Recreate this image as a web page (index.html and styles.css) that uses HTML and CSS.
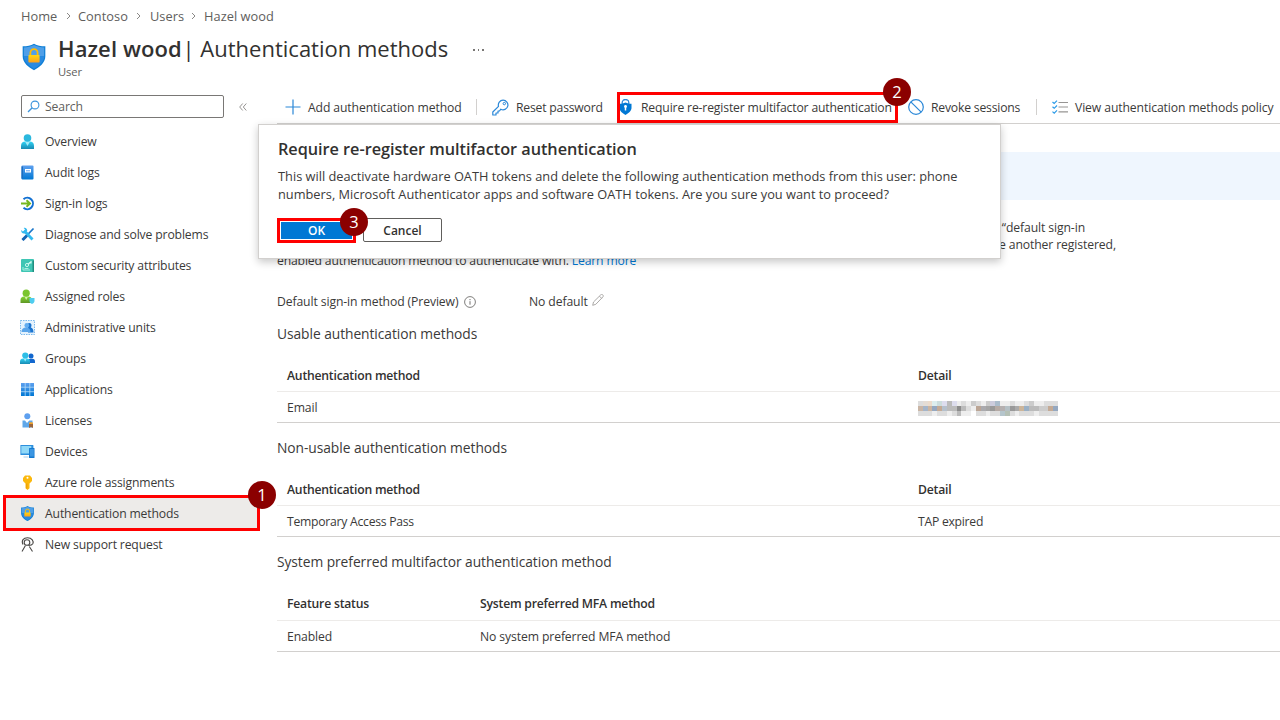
FILE: index.html
```html
<!DOCTYPE html>
<html lang="en">
<head>
    <meta charset="UTF-8">
    <meta name="viewport" content="width=device-width, initial-scale=1.0">
    <title>Hazel wood | Authentication methods</title>
    <link rel="stylesheet" href="styles.css">
</head>
<body>
    <!-- Shared gradients and the shield icon -->
    <svg class="defs" width="0" height="0">
        <defs>
            <linearGradient id="blue" x1="0" y1="0" x2="0" y2="1"><stop offset="0" stop-color="#5ea0ef"/><stop offset="1" stop-color="#0078d4"/></linearGradient>
            <linearGradient id="cyan" x1="0" y1="0" x2="0" y2="1"><stop offset="0" stop-color="#32d4f5"/><stop offset="1" stop-color="#198ab3"/></linearGradient>
            <linearGradient id="green" x1="0" y1="0" x2="0" y2="1"><stop offset="0" stop-color="#86d633"/><stop offset="1" stop-color="#5e9624"/></linearGradient>
            <linearGradient id="gold" x1="0" y1="0" x2="0" y2="1"><stop offset="0" stop-color="#ffd70f"/><stop offset="1" stop-color="#fea11b"/></linearGradient>
            <symbol id="shield" viewBox="0 0 18 20">
                <path d="M9 0C6.5 1.5 4 2 0.5 2v7.5C0.5 14.5 5 17.8 9 20c4-2.2 8.5-5.5 8.5-10.5V2C14 2 11.5 1.5 9 0z" fill="#0f7fd6"/>
                <path d="M9 1C6.5 2.3 4.5 2.8 1.4 2.9v6.6h15.2V2.9C13.5 2.8 11.5 2.3 9 1z" fill="#4f9fe8"/>
                <path d="M1.4 9.5c0 4 3.6 7 7.6 9.4 4-2.4 7.6-5.4 7.6-9.4z" fill="#2a8ae0"/>
                <path d="M6.3 9V6.8a2.7 2.7 0 0 1 5.4 0V9" fill="none" stroke="#ffbd02" stroke-width="1.3"/>
                <rect x="4.8" y="8.5" width="8.4" height="5.6" rx="0.6" fill="url(#gold)"/>
            </symbol>
        </defs>
    </svg>

    <header class="header">
        <div class="breadcrumb">
            <span class="crumb crumb-home">Home</span>
            <svg class="chevron" width="6" height="8" viewBox="0 0 6 8"><path d="M1 1l3 3-3 3"/></svg>
            <span class="crumb crumb-contoso">Contoso</span>
            <svg class="chevron" width="6" height="8" viewBox="0 0 6 8"><path d="M1 1l3 3-3 3"/></svg>
            <span class="crumb crumb-users">Users</span>
            <svg class="chevron" width="6" height="8" viewBox="0 0 6 8"><path d="M1 1l3 3-3 3"/></svg>
            <span class="crumb crumb-name">Hazel wood</span>
        </div>
        <div class="title-row">
            <svg class="title-icon" width="24" height="28"><use href="#shield"/></svg>
            <div class="title-text">
                <h1><strong>Hazel wood</strong> <span>| Authentication methods</span></h1>
                <p class="subtitle">User</p>
            </div>
            <span class="more"><i></i><i></i><i></i></span>
        </div>
    </header>

    <div class="layout">
        <aside class="sidebar">
            <div class="search-row">
                <div class="search">
                    <svg width="13" height="13" viewBox="0 0 13 13"><circle cx="8" cy="5" r="3.9" fill="none" stroke="#3b93dc" stroke-width="1.1"/><path d="M5.2 7.8L1 12" stroke="#3b93dc" stroke-width="1.3"/></svg>
                    <span>Search</span>
                </div>
                <svg class="collapse" width="8" height="8" viewBox="0 0 8 8"><path d="M3.7 0.5L0.7 4l3 3.5M7.3 0.5L4.3 4l3 3.5" fill="none" stroke="#8a8886" stroke-width="0.9"/></svg>
            </div>
            <ul class="nav">
                <li class="nav-item">
                    <svg width="14" height="15" viewBox="0 0 14 15"><path d="M0.5 15v-3.5C0.5 9 2.5 7.5 4.5 7.5h5c2 0 4 1.5 4 4V15z" fill="url(#cyan)"/><path d="M4.5 7.5L7 12l2.5-4.5z" fill="#a4ecfa"/><circle cx="7" cy="4" r="3.8" fill="#2bb8de"/></svg>
                    <span>Overview</span>
                </li>
                <li class="nav-item">
                    <svg width="14" height="15" viewBox="0 0 14 15"><rect x="1" y="0.5" width="12" height="14" rx="1" fill="url(#blue)"/><path d="M1 1.5h1.5v12H1z" fill="#1c6dc0"/><rect x="4.5" y="4" width="6" height="3.5" fill="#fff"/><path d="M5.5 5.8h4" stroke="#5ea0ef"/></svg>
                    <span>Audit logs</span>
                </li>
                <li class="nav-item">
                    <svg width="14" height="15" viewBox="0 0 14 15"><path d="M3 3.2a5.7 5.7 0 1 1 0 8.6" fill="none" stroke="#1270d2" stroke-width="2"/><path d="M0.5 7.5H9M6 4.2L9.5 7.5 6 10.8" fill="none" stroke="#76b820" stroke-width="1.9"/></svg>
                    <span>Sign-in logs</span>
                </li>
                <li class="nav-item">
                    <svg width="14" height="15" viewBox="0 0 14 15"><path d="M13 1.5L2 13" stroke="#1976c9" stroke-width="1.8"/><path d="M6.5 8.5L2 13" stroke="#1464b4" stroke-width="3"/><path d="M3.5 3.5L12 12.5" stroke="#32b9ef" stroke-width="2.8"/><path d="M3.2 0.9L4.6 2.5 4 4 2.4 4.4.8 3C.3 5.2 2 7 4.3 6.4L6.7 4C7 2 5.2.3 3.2.9z" fill="#32b9ef"/></svg>
                    <span>Diagnose and solve problems</span>
                </li>
                <li class="nav-item">
                    <svg width="14" height="15" viewBox="0 0 14 15"><rect x="0.5" y="1" width="13" height="13" rx="1" fill="#3fc6b4"/><path d="M12 2.5h1.5V14H12z" fill="#218e80"/><path d="M2.5 9v3h7M4 10.5h4" fill="none" stroke="#a8eee0" stroke-width="1"/><path d="M7.5 6.5l3-3M10.5 3v2.5" stroke="#d5faf2" stroke-width="1.2"/><circle cx="6.5" cy="7" r="1.6" fill="none" stroke="#d5faf2" stroke-width="0.9"/></svg>
                    <span>Custom security attributes</span>
                </li>
                <li class="nav-item">
                    <svg width="15" height="15" viewBox="0 0 15 15"><path d="M0.5 14v-3C0.5 9 2 7.5 4 7.5h4.5c2 0 3.5 1.5 3.5 3.5v3z" fill="url(#green)"/><path d="M4.5 7.5L6.2 11 8 7.5z" fill="#d6f3a9"/><circle cx="6.2" cy="4.2" r="3.6" fill="#7ac52d"/><path d="M9.5 9h5v3c0 1.5-1.5 2.5-2.5 3-1-.5-2.5-1.5-2.5-3z" fill="#4fcdf0"/></svg>
                    <span>Assigned roles</span>
                </li>
                <li class="nav-item">
                    <svg width="15" height="15" viewBox="0 0 15 15"><rect x="0.5" y="0.5" width="14" height="14" fill="#e4f2fd" stroke="#5ea8e8" stroke-width="0.8" stroke-dasharray="1.5 1"/><path d="M7.5 4c1-1.500 4-1.200 4 1.300 0 1-.3 1.700-.7 2.200 1.700.5 2.700 2 2.700 5H8z" fill="#1b74d0"/><circle cx="6.8" cy="5.5" r="2.4" fill="#63adf0"/><path d="M1.500 12c0-3 1.700-4.500 4.500-4.500s4.500 1.500 4.500 4.500z" fill="#5aa5ea"/></svg>
                    <span>Administrative units</span>
                </li>
                <li class="nav-item">
                    <svg width="15" height="15" viewBox="0 0 15 15"><circle cx="11" cy="5" r="2.5" fill="#1267ce"/><path d="M8 12V9.5C8 8.5 9 7.8 10 7.8h2.5c1.5 0 2.5 1 2.5 2.5V12z" fill="#1267ce"/><path d="M0 13v-2.5C0 8.8 1.3 7.5 3 7.5h4c1.7 0 3 1.3 3 3V13z" fill="url(#cyan)"/><path d="M3.7 7.5L5.2 10.5l1.5-3z" fill="#a4ecfa"/><circle cx="5.3" cy="4.5" r="3.1" fill="#2ebee6"/></svg>
                    <span>Groups</span>
                </li>
                <li class="nav-item">
                    <svg width="14" height="15" viewBox="0 0 14 15"><rect x="0.5" y="1" width="13" height="13" fill="url(#blue)"/><path d="M4.7 1v13M9.3 1v13M.5 5.2h13M.5 9.7h13" stroke="#b8dcf8" stroke-width="0.8"/></svg>
                    <span>Applications</span>
                </li>
                <li class="nav-item">
                    <svg width="14" height="15" viewBox="0 0 14 15"><circle cx="6.8" cy="3.3" r="3" fill="#5ea0ef"/><path d="M2 14.5V7.5h2.5L6.5 10l2.300-2.500H12v7z" fill="#5fa7e9"/><rect x="8.5" y="9.3" width="4" height="4" rx="1" fill="#f0a32c"/><path d="M8.5 11h4v4l-2-1-2 1z" fill="#9b653c"/></svg>
                    <span>Licenses</span>
                </li>
                <li class="nav-item">
                    <svg width="15" height="15" viewBox="0 0 15 15"><rect x="0.4" y="1" width="13" height="10" rx="0.5" fill="#2d8fdd"/><rect x="1.3" y="2" width="10" height="7.5" fill="#8fd8f8"/><path d="M3.5 13h5" stroke="#a8cdea"/><rect x="9" y="4" width="5.5" height="10" rx="0.5" fill="#1479cf"/><rect x="9.8" y="5" width="4" height="7.5" fill="#3b96e2"/></svg>
                    <span>Devices</span>
                </li>
                <li class="nav-item">
                    <svg width="14" height="15" viewBox="0 0 14 15"><path d="M4.5 0.5h5L11.5 3v3L9 8.5v4.7L7 15l-2-1.800V8.500L2.500 6V3z" fill="#fbb80d"/><circle cx="7" cy="2.8" r="1" fill="#fff"/><path d="M6.3 8.5v5" stroke="#e6920a" stroke-width="0.8"/></svg>
                    <span>Azure role assignments</span>
                </li>
                <li class="nav-item active">
                    <svg width="14" height="15"><use href="#shield"/></svg>
                    <span>Authentication methods</span>
                    <div class="highlight highlight-nav"></div>
                    <b class="badge badge-1">1</b>
                </li>
                <li class="nav-item">
                    <svg width="14" height="15" viewBox="0 0 14 15"><g fill="none" stroke="#4a4846" stroke-width="1.1"><path d="M2.5 7.5C0.5 3.5 3 .8 7 .8c4.5 0 6.5 3.5 5.3 6-.8 1.500-2.300 1.700-4.300 1.700"/><circle cx="6.5" cy="5.5" r="2.8"/><path d="M1.5 14.5l3.3-5.7M12 14.5L8.8 9.5"/></g></svg>
                    <span>New support request</span>
                </li>
            </ul>
        </aside>

        <main class="main">
            <div class="toolbar">
                <div class="tool tool-add">
                    <svg width="16" height="16" viewBox="0 0 16 16"><path d="M8 .5v15M.5 8h15" stroke="#2b88d8" stroke-width="1.2"/></svg>
                    <span>Add authentication method</span>
                </div>
                <div class="tool tool-reset">
                    <svg width="17" height="17" viewBox="0 0 17 17"><path d="M8.8 10.2A4.8 4.8 0 1 0 6.5 7.3L.8 13v3H4v-2h2v-2h1.5z" fill="none" stroke="#2b88d8" stroke-width="1.2" stroke-linejoin="round"/><circle cx="12.3" cy="4.6" r="1.2" fill="none" stroke="#2b88d8"/></svg>
                    <span>Reset password</span>
                </div>
                <div class="tool tool-require">
                    <svg width="13" height="16" viewBox="0 0 13 16"><path d="M3.2 5V3.5a3.3 3 0 0 1 6.6 0V5" fill="none" stroke="#2b88d8" stroke-width="1.3"/><path d="M6.5 3.5c2 1 3.5 1.3 6 1.3V9c0 3-3 5.3-6 7-3-1.700-6-4-6-7V4.800c2.500 0 4-.3 6-1.300z" fill="#0078d4"/><circle cx="6.5" cy="7.5" r="1.4" fill="#fff"/><path d="M6.5 7.5v4" stroke="#fff" stroke-width="1.5"/></svg>
                    <span>Require re-register multifactor authentication</span>
                    <div class="highlight highlight-tool"></div>
                    <b class="badge badge-2">2</b>
                </div>
                <div class="tool tool-revoke">
                    <svg width="16" height="16" viewBox="0 0 16 16"><circle cx="8" cy="8" r="7.3" fill="none" stroke="#2b88d8" stroke-width="1.2"/><path d="M2.8 2.8l10.4 10.4" stroke="#2b88d8" stroke-width="1.2"/></svg>
                    <span>Revoke sessions</span>
                </div>
                <div class="tool tool-view">
                    <svg width="16" height="14" viewBox="0 0 16 14"><path d="M.5 2l1.700 1.500L5 .7M.5 6.800l1.700 1.500L5 5.500M.5 11.600l1.700 1.500L5 10.300" fill="none" stroke="#2b9be8" stroke-width="1.2"/><path d="M6.5 2.5H16M6.5 7H16M6.5 11.8H16" stroke="#979593" stroke-width="1.2"/></svg>
                    <span>View authentication methods policy</span>
                </div>
            </div>

            <div class="banner"></div>

            <div class="intro">
                <p class="line line-1">The user's “default sign-in</p>
                <p class="line line-2">the user can always choose another registered,</p>
                <p class="line line-3">enabled authentication method to authenticate with. <a>Learn more</a></p>
            </div>

            <div class="default-method">
                <span class="default-label">Default sign-in method (Preview)</span>
                <svg class="info" width="12" height="12" viewBox="0 0 12 12"><circle cx="6" cy="6" r="5.4" fill="none" stroke="#605e5c" stroke-width="0.8"/><path d="M6 5.2v3.5M6 3v1.2" stroke="#605e5c" stroke-width="0.9"/></svg>
                <span class="default-value">No default</span>
                <svg class="pencil" width="12" height="12" viewBox="0 0 12 12"><path d="M.7 11.300l.8-3.300L8.700.9c.7-.6 1.500-.6 2.100 0s.6 1.500 0 2.100L3.800 10.300zM7.500 2.200l2.200 2.200" fill="none" stroke="#a19f9d" stroke-width="0.9"/></svg>
            </div>

            <section class="methods">
                <h2>Usable authentication methods</h2>
                <div class="row head"><span>Authentication method</span><span>Detail</span></div>
                <div class="row"><span>Email</span><svg class="mosaic" id="mosaic" width="140" height="15" viewBox="0 0 29 3" preserveAspectRatio="none" shape-rendering="crispEdges"></svg></div>
            </section>

            <section class="methods">
                <h2>Non-usable authentication methods</h2>
                <div class="row head"><span>Authentication method</span><span>Detail</span></div>
                <div class="row pass"><span>Temporary Access Pass</span><span>TAP expired</span></div>
            </section>

            <section class="methods status">
                <h2>System preferred multifactor authentication method</h2>
                <div class="row head"><span>Feature status</span><span>System preferred MFA method</span></div>
                <div class="row"><span>Enabled</span><span>No system preferred MFA method</span></div>
            </section>
        </main>
    </div>

    <div class="dialog">
        <h3>Require re-register multifactor authentication</h3>
        <p class="dialog-text">This will deactivate hardware OATH tokens and delete the following authentication methods from this user: phone<br>numbers, Microsoft Authenticator apps and software OATH tokens. Are you sure you want to proceed?</p>
        <div class="dialog-buttons">
            <div class="ok-wrap">
                <button class="btn-ok">OK</button>
                <b class="badge badge-3">3</b>
            </div>
            <button class="btn-cancel">Cancel</button>
        </div>
    </div>

    <script>
        // Pixelated email address, one colour per cell
        const cells = [
            'ddd e5ddd5 ecdccc dee cdd dde bbb dde eee ddd eee ccc ddd eee ccc ccd abbccc eee eee ddd eee eee ddd ccc eee eee ddd ddd ddd',
            'c9b5a5 a5b5c9 ccb5a0 95a8c0 c4aa95 b5c0cc bbb bbb 8c8c8c bbb ddd eee bba595 aaaaae a5a5a5 999 b5aaa5 b5b0b0 b5c0c5 999 aaa ccb59a 9ab0c5 bbb bbb ccc ccc c4aa95 95a8c0',
            'ddd ddd ddd eee ddd ddd eee ddd bbb eee eee fff ddd ddd eee ddd ddd b5c5cc b5c0b5 ddd eee ddd ddd ddd eee ddd ddd ddd ddd'
        ];
        let rects = '';
        cells.forEach((row, y) => {
            row.split(' ').forEach((color, x) => {
                rects += `<rect x="${x}" y="${y}" width="1" height="1" fill="#${color}"/>`;
            });
        });
        document.getElementById('mosaic').innerHTML = rects;
    </script>
</body>
</html>
```
FILE: styles.css
```css
* {
    box-sizing: border-box;
}
body {
    margin: 0;
    width: 1280px;
    height: 720px;
    overflow: hidden;
    position: relative;
    background-color: #fff;
    color: #3b3a39;
    font-family: "Open Sans", "Noto Sans", sans-serif;
    font-size: 12.2px;
    letter-spacing: -0.11px;
    line-height: 16px;
    white-space: nowrap;
}
h1, h2, h3, p, ul {
    margin: 0;
    padding: 0;
    font-weight: normal;
}
svg {
    display: block;
    flex: none;
}
.defs {
    position: absolute;
}

/* Header */
.header {
    height: 90px;
    padding: 8px 0 0 21px;
}
.breadcrumb {
    display: flex;
    align-items: center;
    height: 16px;
    font-size: 12.8px;
    letter-spacing: 0.04px;
    color: #605e5c;
}
.crumb-home {
    width: 45px;
}
.crumb-contoso {
    width: 58px;
    margin-left: 6px;
}
.crumb-users {
    width: 41px;
    margin-left: 8px;
}
.crumb-name {
    margin-left: 7px;
}
.chevron {
    fill: none;
    stroke: #8a8886;
    stroke-width: 1;
}
.title-row {
    display: flex;
    margin-top: 9px;
}
.title-icon {
    margin: 10px 0 0 1px;
}
.title-text {
    margin-left: 12px;
    width: 415px;
}
h1 {
    font-size: 22px;
    letter-spacing: 0;
    line-height: 30px;
    color: #323130;
}
h1 strong {
    font-weight: 600;
    letter-spacing: 0.1px;
}
h1 span {
    margin-left: -5px;
}
.subtitle {
    padding-top: 1px;
    font-size: 11.2px;
    line-height: 16px;
    color: #605e5c;
}
.more {
    display: flex;
    gap: 3px;
    padding-top: 16px;
}
.more i {
    width: 1.5px;
    height: 1.5px;
    background-color: #797775;
}

/* Sidebar */
.layout {
    display: flex;
}
.sidebar {
    width: 277px;
}
.search-row {
    display: flex;
    align-items: center;
    padding: 5px 0 0 21px;
}
.search {
    display: flex;
    align-items: center;
    gap: 5px;
    width: 203px;
    height: 23px;
    padding-left: 5px;
    border: 1px solid #797775;
    border-radius: 2px;
    color: #605e5c;
}
.search span {
    padding-top: 1px;
}
.collapse {
    margin-left: 15px;
}
.nav {
    list-style: none;
    padding-top: 8px;
    letter-spacing: -0.15px;
}
.nav-item {
    position: relative;
    display: flex;
    align-items: center;
    height: 31px;
    padding-left: 20px;
}
.nav-item svg {
    width: 15px;
    margin-right: 10px;
}
.nav-item span {
    padding-top: 1px;
}
.nav-item.active {
    margin: 0 20px 0 5px;
    padding-left: 15px;
    background-color: #edebe9;
}

/* Numbered callouts */
.highlight {
    position: absolute;
    border: 3px solid #f00;
}
.highlight-nav {
    left: -2px;
    top: -3px;
    width: 257px;
    height: 36px;
}
.highlight-tool {
    left: -2px;
    top: 2px;
    width: 281px;
    height: 31px;
}
.badge {
    position: absolute;
    z-index: 2;
    width: 28px;
    height: 28px;
    border-radius: 50%;
    background-color: #8b0000;
    color: #fff;
    font-size: 16.5px;
    font-weight: 400;
    line-height: 28px;
    text-align: center;
}
.badge-1 {
    left: 243px;
    top: -17px;
}
.badge-2 {
    left: 264px;
    top: -12px;
}
.badge-3 {
    left: 60px;
    top: -13px;
}

/* Toolbar */
.main {
    width: 1003px;
}
.toolbar {
    display: flex;
    height: 34px;
    padding-left: 8px;
    border-bottom: 1px solid #d2d0ce;
}
.tool {
    position: relative;
    display: flex;
    align-items: center;
    height: 34px;
    flex: none;
}
.tool span {
    padding-top: 1px;
}
.tool-add {
    width: 207px;
    gap: 7px;
}
.tool-reset {
    width: 127px;
    gap: 7px;
    letter-spacing: -0.2px;
}
.tool-require {
    width: 289px;
    gap: 9px;
    letter-spacing: -0.16px;
}
.tool-revoke {
    width: 144px;
    gap: 7px;
    letter-spacing: -0.2px;
}
.tool-view {
    gap: 7px;
}
.tool-add::after, .tool-revoke::after {
    content: "";
    width: 1px;
    height: 16px;
    margin: 0 15px 0 auto;
    background-color: #d2d0ce;
}

/* Content */
.banner {
    height: 48px;
    margin-top: 28px;
    background-color: #eff6fe;
}
.intro {
    padding-top: 20px;
    line-height: 16.5px;
}
.line-1 {
    width: 808px;
    text-align: right;
}
.line-2 {
    width: 839px;
    text-align: right;
}
.line-3 {
    letter-spacing: -0.16px;
}
a {
    color: #0078d4;
}
.default-method {
    display: flex;
    align-items: center;
    height: 16px;
    margin-top: 24px;
}
.default-label {
    width: 187px;
}
.info {
    margin-right: 53px;
}
.default-value {
    width: 63px;
}
.pencil {
    margin-top: -3px;
}
.methods {
    height: 114px;
    padding-top: 13px;
}
h2 {
    font-size: 13.8px;
    letter-spacing: -0.06px;
    line-height: 22px;
}
.row {
    display: flex;
    align-items: center;
    height: 31px;
    padding: 3px 0 0 10px;
    border-bottom: 1px solid #d2d0ce;
}
.row.head {
    height: 34px;
    margin-top: 13px;
    border-bottom-color: #edebe9;
    font-weight: 600;
    letter-spacing: -0.21px;
    color: #323130;
}
.row span:first-child {
    width: 631px;
}
.status .row span:first-child {
    width: 193px;
}
.row.pass {
    letter-spacing: -0.26px;
}
.status .row.head {
    height: 35px;
}

/* Confirmation dialog */
.dialog {
    position: absolute;
    left: 258px;
    top: 124px;
    width: 743px;
    height: 135px;
    padding: 13px 19px 0;
    border: 1px solid #d2d0ce;
    background-color: #fff;
    box-shadow: 0 3px 8px rgba(0, 0, 0, 0.22);
}
.dialog h3 {
    font-size: 16.3px;
    font-weight: 600;
    letter-spacing: -0.04px;
    line-height: 22px;
    color: #323130;
}
.dialog-text {
    padding-top: 7px;
    font-size: 12.8px;
    letter-spacing: 0;
    line-height: 18px;
}
.dialog-buttons {
    display: flex;
    gap: 7px;
    margin-top: 15px;
}
.ok-wrap {
    position: relative;
    width: 79px;
    height: 25px;
    margin-left: -1px;
    border: 3px solid #f00;
    padding: 1px;
}
.dialog button {
    display: block;
    padding: 0;
    font-family: inherit;
    font-size: 12px;
    font-weight: 600;
}
.btn-ok {
    width: 71px;
    height: 17px;
    border: 0;
    background-color: #0078d4;
    color: #fff;
}
.btn-cancel {
    width: 79px;
    height: 24px;
    border: 1px solid #605e5c;
    border-radius: 2px;
    background-color: #fff;
    color: #323130;
}
```
